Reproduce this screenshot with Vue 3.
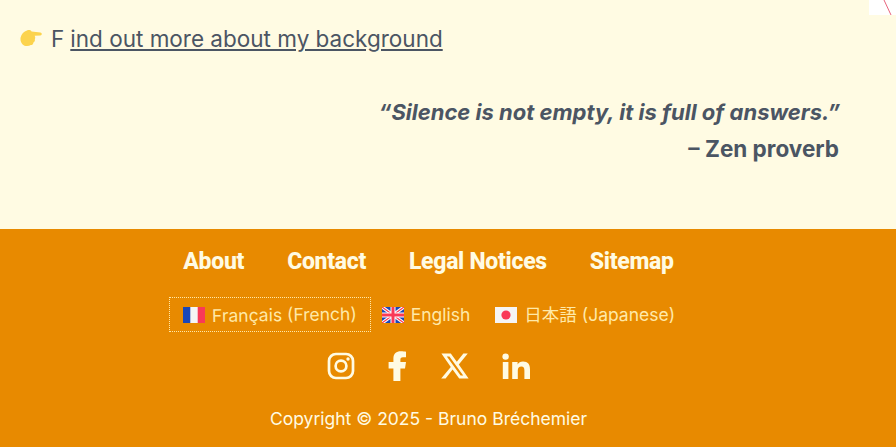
<template>
  <div class="page">
    <main class="content">
      <svg class="corner" viewBox="0 0 27 15" aria-hidden="true">
        <path d="M15 0 L22 15" stroke="#e8647c" stroke-width="1" fill="none" />
      </svg>

      <p class="more">
        <svg class="more__hand" viewBox="0 0 22 18" aria-hidden="true">
          <path
            d="M0.6 8.5 C1.2 5 4 2.4 7 1.4 C9 0.8 10.6 1 11.6 2.6 L20.4 3.4 C22.2 3.8 22.2 6.2 20.4 6.4 L14.6 6.8 C15.4 8 15.4 9.4 14.8 10.2 C15.2 11.6 14.6 13 13.4 13.4 C13.4 15 12.2 16 10.8 16 C8.4 17.6 4.4 17.4 2.4 15.2 C0.8 13.4 0.2 11 0.6 8.5 Z"
            fill="#fcd34d"
          />
        </svg>
        <span class="more__first">F</span>
        <a href="#" class="more__link">ind out more about my background</a>
      </p>

      <blockquote class="quote">
        <p class="quote__text">“Silence is not empty, it is full of answers.”</p>
        <p class="quote__author">– Zen proverb</p>
      </blockquote>
    </main>

    <footer class="footer">
      <nav class="footer__nav">
        <a v-for="link in links" :key="link" href="#">{{ link }}</a>
      </nav>

      <div class="langs">
        <a href="#" class="lang lang--current">
          <svg class="flag" viewBox="0 0 22 16" aria-hidden="true">
            <rect width="22" height="16" fill="#f5f5f5" />
            <rect width="7.3" height="16" fill="#1a47b8" />
            <rect x="14.7" width="7.3" height="16" fill="#f93958" />
          </svg>
          <span class="lang__label lang__label--tilted">Français (French)</span>
        </a>
        <a href="#" class="lang">
          <svg class="flag" viewBox="0 0 22 16" aria-hidden="true">
            <rect width="22" height="16" fill="#1a47b8" />
            <path d="M0 0 L22 16 M22 0 L0 16" stroke="#fff" stroke-width="3.4" />
            <path d="M0 0 L22 16 M22 0 L0 16" stroke="#f93958" stroke-width="1.2" />
            <path d="M11 0 V16 M0 8 H22" stroke="#fff" stroke-width="5" />
            <path d="M11 0 V16 M0 8 H22" stroke="#f93958" stroke-width="3" />
          </svg>
          <span class="lang__label">English</span>
        </a>
        <a href="#" class="lang">
          <svg class="flag" viewBox="0 0 22 16" aria-hidden="true">
            <rect width="22" height="16" fill="#f5f5f5" />
            <circle cx="11" cy="8" r="4.6" fill="#f93958" />
          </svg>
          <span class="lang__label">日本語 (Japanese)</span>
        </a>
      </div>

      <div class="social">
        <a href="#" aria-label="Instagram">
          <svg viewBox="0 0 28 28" width="28" height="28">
            <rect x="2" y="2" width="24" height="24" rx="7" fill="none" stroke="currentColor" stroke-width="2.7" />
            <circle cx="14" cy="14" r="5.4" fill="none" stroke="currentColor" stroke-width="2.7" />
            <circle cx="21" cy="7" r="1.7" fill="currentColor" />
          </svg>
        </a>
        <a href="#" aria-label="Facebook">
          <svg viewBox="0 0 20 30" width="20" height="30">
            <path
              d="M5.4 30 V17.4 H0.6 V11 H5.4 V7.5 C5.4 2.6 8.4 0.2 12.8 0.2 C15 0.2 17 0.5 18 0.7 V6.2 H15 C12.8 6.2 12.4 7.2 12.4 8.6 V11 H18 L17 17.4 H12.4 V30 Z"
              fill="currentColor"
            />
          </svg>
        </a>
        <a href="#" aria-label="X">
          <svg viewBox="0 0 28 26" width="28" height="26">
            <path
              fill-rule="evenodd"
              d="M0.4 0.6 H9.8 L15.8 8.8 L22.4 0.6 H26.8 L17.8 11.4 L27.6 25.4 H18.2 L11.6 16.4 L4.6 25.4 H0.2 L9.8 14 Z M5.8 3.4 L19.6 22.6 H22.2 L8.4 3.4 Z"
              fill="currentColor"
            />
          </svg>
        </a>
        <a href="#" aria-label="LinkedIn">
          <svg viewBox="0 0 28 26" width="28" height="26">
            <circle cx="3.6" cy="3.6" r="3.2" fill="currentColor" />
            <rect x="0.8" y="9" width="5.6" height="17" fill="currentColor" />
            <path
              d="M10.2 9 H15.6 V11.4 C16.6 9.8 18.4 8.6 21 8.6 C26 8.6 28 11.6 28 16.4 V26 H22.4 V17.4 C22.4 15 21.6 13.4 19.4 13.4 C17 13.4 15.8 15 15.8 17.4 V26 H10.2 Z"
              fill="currentColor"
            />
          </svg>
        </a>
      </div>

      <p class="copyright">Copyright © 2025 - Bruno Bréchemier</p>
    </footer>
  </div>
</template>

<script setup>
const links = ['About', 'Contact', 'Legal Notices', 'Sitemap']
</script>

<style>
html,
body {
  margin: 0;
  overflow: hidden;
}
</style>

<style scoped>
.page {
  height: 447px;
  display: flex;
  flex-direction: column;
  font-family: Inter, "Noto Sans CJK JP", sans-serif;
}

.content {
  position: relative;
  height: 229px;
  box-sizing: border-box;
  padding: 24px 56px 0 20px;
  background: #fffbe3;
  color: #4b5563;
}

.corner {
  position: absolute;
  top: 0;
  right: 0;
  width: 27px;
  height: 15px;
  background: #fff;
}

.more {
  display: flex;
  align-items: center;
  margin: 0;
  height: 30px;
  font-size: 22.5px;
  line-height: 30px;
}

.more__hand {
  width: 22px;
  height: 18px;
  margin-top: -3px;
  margin-right: 9px;
}

.more__first {
  margin-right: 6px;
}

.more__link {
  color: inherit;
  text-decoration: underline;
}

.quote {
  margin: 41px 0 0;
  text-align: right;
  font-weight: 700;
}

.quote p {
  margin: 0;
}

.quote__text {
  font-size: 22px;
  font-style: italic;
  line-height: 34px;
}

.quote__author {
  margin-top: 3px !important;
  padding-right: 1px;
  font-size: 22.5px;
  line-height: 34px;
}

.footer {
  flex: 1;
  display: flex;
  flex-direction: column;
  align-items: center;
  padding-right: 39px;
  background: #e88a00;
  color: #fffbe3;
}

.footer a {
  color: inherit;
  text-decoration: none;
}

.footer__nav {
  display: flex;
  gap: 43px;
  margin-top: 18px;
  font-family: Roboto, sans-serif;
  font-size: 23px;
  font-weight: 800;
  line-height: 30px;
  letter-spacing: -0.3px;
}

.langs {
  display: flex;
  align-items: center;
  margin-top: 20px;
  font-size: 17.5px;
  color: #ffe9a8;
}

.lang {
  display: flex;
  align-items: center;
  gap: 7px;
  height: 35px;
  box-sizing: border-box;
  margin-right: 25px;
}

.lang:last-child {
  margin-right: 13px;
}

.lang__label {
  line-height: 24px;
  height: 24px;
}

.lang__label--tilted {
  transform: rotate(-0.8deg);
}

.lang--current {
  padding: 0 13px;
  margin-right: 11px;
  border: 1px dotted #ffe9a8;
}

.flag {
  width: 22px;
  height: 16px;
}

.social {
  display: flex;
  align-items: center;
  gap: 33px;
  margin-top: 19px;
  color: #fffbe3;
}

.social svg {
  display: block;
}

.copyright {
  margin: 25px 0 0;
  font-size: 17.5px;
  line-height: 26px;
  color: #fffbe3;
}
</style>
